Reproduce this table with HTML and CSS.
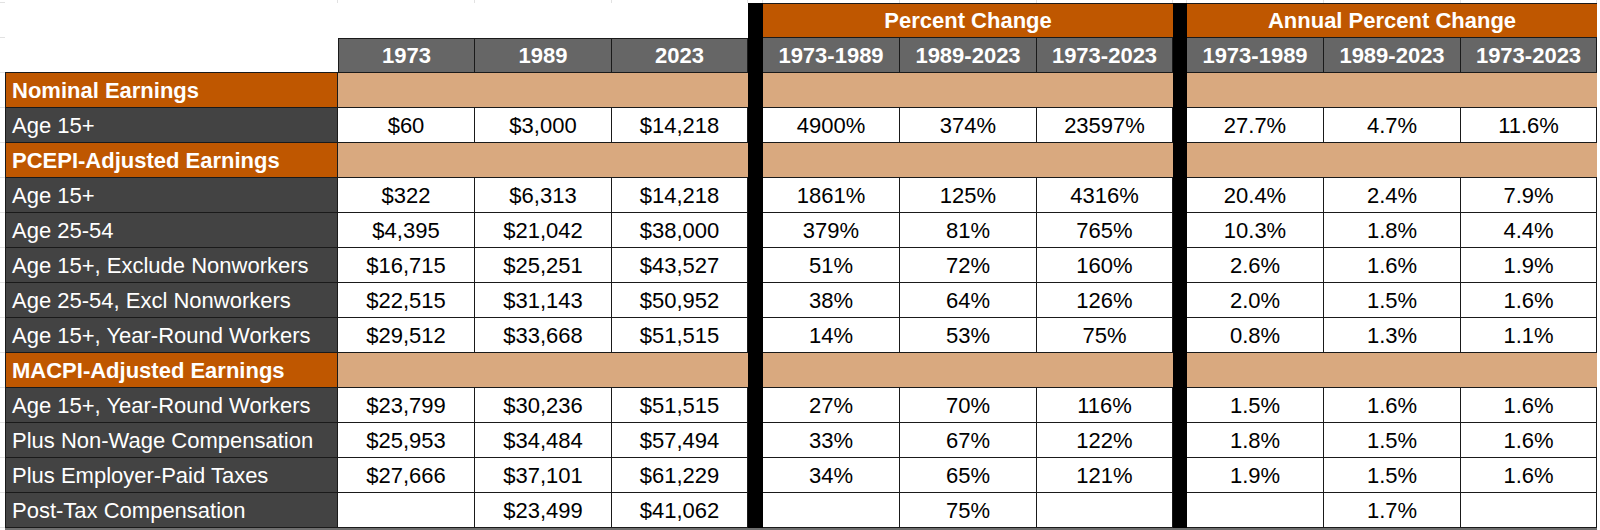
FILE: index.html
```html
<!DOCTYPE html>
<html lang="en">
<head>
<meta charset="utf-8">
<title>Earnings Table</title>
<link rel="stylesheet" href="styles.css">
</head>
<body>
<div class="sheet">
  <div class="gutter"></div>
  <div class="pad"></div>
  <div class="bar bar-a"></div>
  <div class="bar bar-b"></div>
  <div class="bottom-line"></div>

  <!-- top strip -->
  <div class="strip"></div><div class="strip"></div><div class="strip"></div><div class="strip"></div>
  <div class="strip"></div><div class="strip"></div><div class="strip"></div><div class="strip"></div>
  <div class="strip"></div><div class="strip"></div><div class="strip"></div><div class="strip"></div>

  <!-- group header -->
  <div class="spacer"></div>
  <div class="group">Percent Change</div>
  <div class="group">Annual Percent Change</div>

  <!-- year header -->
  <div class="corner"></div>
  <div class="yh first">1973</div><div class="yh">1989</div><div class="yh">2023</div>
  <div class="yh sub">1973-1989</div><div class="yh sub">1989-2023</div><div class="yh sub">1973-2023</div>
  <div class="yh sub">1973-1989</div><div class="yh sub">1989-2023</div><div class="yh sub">1973-2023</div>

  <!-- Nominal -->
  <div class="sec">Nominal Earnings</div>
  <div class="tan"></div><div class="tan"></div><div class="tan"></div>
  <div class="lab">Age 15+</div>
  <div class="v">$60</div><div class="v">$3,000</div><div class="v">$14,218</div>
  <div class="v">4900%</div><div class="v">374%</div><div class="v">23597%</div>
  <div class="v">27.7%</div><div class="v">4.7%</div><div class="v">11.6%</div>

  <!-- PCEPI -->
  <div class="sec">PCEPI-Adjusted Earnings</div>
  <div class="tan"></div><div class="tan"></div><div class="tan"></div>
  <div class="lab">Age 15+</div>
  <div class="v">$322</div><div class="v">$6,313</div><div class="v">$14,218</div>
  <div class="v">1861%</div><div class="v">125%</div><div class="v">4316%</div>
  <div class="v">20.4%</div><div class="v">2.4%</div><div class="v">7.9%</div>
  <div class="lab">Age 25-54</div>
  <div class="v">$4,395</div><div class="v">$21,042</div><div class="v">$38,000</div>
  <div class="v">379%</div><div class="v">81%</div><div class="v">765%</div>
  <div class="v">10.3%</div><div class="v">1.8%</div><div class="v">4.4%</div>
  <div class="lab">Age 15+, Exclude Nonworkers</div>
  <div class="v">$16,715</div><div class="v">$25,251</div><div class="v">$43,527</div>
  <div class="v">51%</div><div class="v">72%</div><div class="v">160%</div>
  <div class="v">2.6%</div><div class="v">1.6%</div><div class="v">1.9%</div>
  <div class="lab">Age 25-54, Excl Nonworkers</div>
  <div class="v">$22,515</div><div class="v">$31,143</div><div class="v">$50,952</div>
  <div class="v">38%</div><div class="v">64%</div><div class="v">126%</div>
  <div class="v">2.0%</div><div class="v">1.5%</div><div class="v">1.6%</div>
  <div class="lab">Age 15+, Year-Round Workers</div>
  <div class="v">$29,512</div><div class="v">$33,668</div><div class="v">$51,515</div>
  <div class="v">14%</div><div class="v">53%</div><div class="v">75%</div>
  <div class="v">0.8%</div><div class="v">1.3%</div><div class="v">1.1%</div>

  <!-- MACPI -->
  <div class="sec">MACPI-Adjusted Earnings</div>
  <div class="tan"></div><div class="tan"></div><div class="tan"></div>
  <div class="lab">Age 15+, Year-Round Workers</div>
  <div class="v">$23,799</div><div class="v">$30,236</div><div class="v">$51,515</div>
  <div class="v">27%</div><div class="v">70%</div><div class="v">116%</div>
  <div class="v">1.5%</div><div class="v">1.6%</div><div class="v">1.6%</div>
  <div class="lab">Plus Non-Wage Compensation</div>
  <div class="v">$25,953</div><div class="v">$34,484</div><div class="v">$57,494</div>
  <div class="v">33%</div><div class="v">67%</div><div class="v">122%</div>
  <div class="v">1.8%</div><div class="v">1.5%</div><div class="v">1.6%</div>
  <div class="lab">Plus Employer-Paid Taxes</div>
  <div class="v">$27,666</div><div class="v">$37,101</div><div class="v">$61,229</div>
  <div class="v">34%</div><div class="v">65%</div><div class="v">121%</div>
  <div class="v">1.9%</div><div class="v">1.5%</div><div class="v">1.6%</div>
  <div class="lab">Post-Tax Compensation</div>
  <div class="v"></div><div class="v">$23,499</div><div class="v">$41,062</div>
  <div class="v"></div><div class="v">75%</div><div class="v"></div>
  <div class="v"></div><div class="v">1.7%</div><div class="v"></div>
</div>
</body>
</html>
```

FILE: styles.css
```css
html, body {
  margin: 0;
  padding: 0;
  background: #ffffff;
}

.sheet {
  display: grid;
  grid-template-columns: 5px 333px 137px 137px 136px 15px 137px 137px 136px 14px 137px 137px 136px 3px;
  grid-template-rows: 3px repeat(15, 35px) 2px;
  font-family: "Liberation Sans", Arial, sans-serif;
  font-size: 22px;
  color: #000;
}

.sheet > div {
  box-sizing: border-box;
}

.gutter {
  grid-column: 1;
  grid-row: 1 / 18;
  background-image: linear-gradient(to bottom, transparent 34px, #e2e2e2 34px);
  background-size: 100% 35px;
  background-position: 0 3px;
}

.pad {
  grid-column: 14;
  grid-row: 1 / 18;
}

.bar {
  grid-row: 2 / 17;
  background: #000;
}
.bar-a { grid-column: 6; }
.bar-b { grid-column: 10; }

.bottom-line {
  grid-column: 2 / 14;
  grid-row: 17;
  background: #6e6e6e;
}

.strip {
  border-right: 1px solid #e2e2e2;
}

.spacer {
  grid-column: span 4;
}

.group {
  grid-column: span 3;
  background: #bf5700;
  color: #fff;
  font-weight: bold;
  display: flex;
  align-items: center;
  justify-content: center;
  border-top: 1px solid #1a1a1a;
  border-bottom: 1px solid #1a1a1a;
  padding-top: 1px;
}

.corner {
  border-bottom: 1px solid #1a1a1a;
}

.yh {
  background: #666666;
  color: #fff;
  font-weight: bold;
  display: flex;
  align-items: center;
  justify-content: center;
  border-right: 1px solid #1a1a1a;
  border-bottom: 1px solid #1a1a1a;
  border-top: 1px solid #1a1a1a;
  padding-top: 1px;
}
.yh.first {
  border-left: 1px solid #1a1a1a;
}
.yh.sub {
  border-top: none;
}

.sec {
  background: #bf5700;
  color: #fff;
  font-weight: bold;
  display: flex;
  align-items: center;
  padding: 1px 0 0 6px;
  border-left: 1px solid #1a1a1a;
  border-right: 1px solid #1a1a1a;
  border-bottom: 1px solid #1a1a1a;
}

.tan {
  grid-column: span 3;
  background: #d9a97f;
  border-bottom: 1px solid #1a1a1a;
}

.lab {
  background: #434343;
  color: #fff;
  display: flex;
  align-items: center;
  padding: 1px 0 0 6px;
  border-left: 1px solid #1a1a1a;
  border-right: 1px solid #1a1a1a;
  border-bottom: 1px solid #1a1a1a;
  white-space: nowrap;
}

.v {
  background: #fff;
  display: flex;
  align-items: center;
  justify-content: center;
  padding-top: 1px;
  border-right: 1px solid #1a1a1a;
  border-bottom: 1px solid #1a1a1a;
}
```
